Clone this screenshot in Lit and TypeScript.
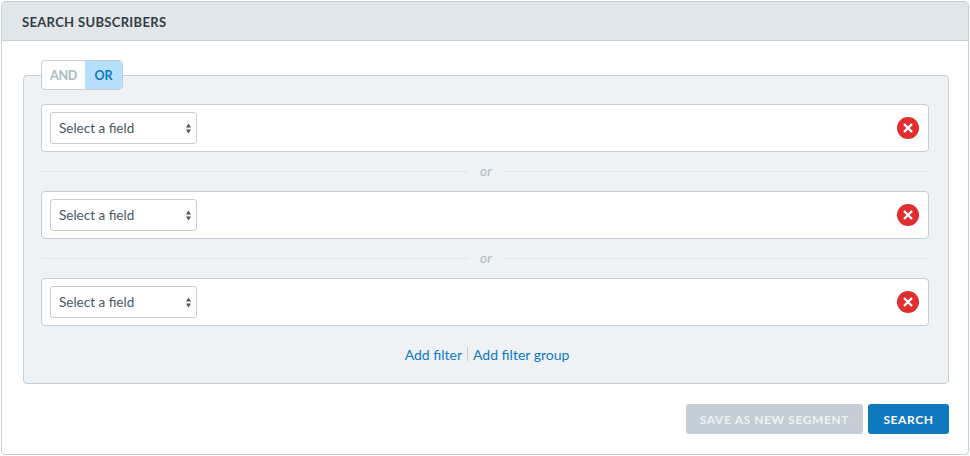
import { LitElement, html, css } from "lit";
import { customElement } from "lit/decorators.js";

@customElement("app-root")
export class AppRoot extends LitElement {
  static styles = css`
    :host { display: block; width: 970px; height: 456px; box-sizing: border-box; padding: 1px; font-family: "Lato", "Open Sans", sans-serif; color: #3d4a52; background: #fff; }
    * { box-sizing: border-box; }
    .card { width: 968px; height: 454px; border: 1px solid #c4ced4; border-radius: 4px; background: #fff; display: flex; flex-direction: column; }
    .head { height: 39px; flex: none; background: #e1e6ea; border-bottom: 1px solid #c4ced4; border-radius: 3px 3px 0 0; padding: 2px 20px 0; display: flex; align-items: center; font-size: 13px; font-weight: 700; letter-spacing: 0.33px; color: #333d44; }
    .body { padding: 19px 19px 0 21px; flex: 1; display: flex; flex-direction: column; }
    .toggle { align-self: flex-start; margin-left: 18px; height: 30px; width: 82px; display: flex; border: 1px solid #c4ced4; border-radius: 4px; background: #fff; font-size: 12.5px; font-weight: 700; position: relative; z-index: 1; margin-bottom: -15px; overflow: hidden; }
    .toggle span { display: flex; align-items: center; justify-content: center; }
    .and { width: 43px; color: #a9bac3; letter-spacing: -0.35px; }
    .or { flex: 1; background: #b5dffb; color: #0e79bf; }
    .group { height: 309px; background: #eef2f5; border: 1px solid #c4ced4; border-radius: 4px; padding: 28px 19px 0 17px; display: flex; flex-direction: column; }
    .row { height: 48px; background: #fff; border: 1px solid #c4ced4; border-radius: 4px; padding: 0 9px 0 8px; display: flex; align-items: center; justify-content: space-between; flex: none; }
    .select { width: 147px; height: 32px; border: 1px solid #c4ced4; border-radius: 3px; background: #fff; padding: 0 5px 1px 8px; display: flex; align-items: center; justify-content: space-between; font-size: 13.5px; color: #4a5760; }
    .arrows { margin-top: 1px; }
    .sep { height: 39px; display: flex; align-items: center; gap: 11px; color: #a9bac3; font-style: italic; font-size: 14px; flex: none; }
    .sep span { margin: -2px 0 0 0; }
    .sep i { flex: 1; height: 1px; background: #e1e6ea; }
    .sep i:first-child { flex: none; width: 428px; }
    .links { margin-top: 18px; padding-left: 4px; display: flex; justify-content: center; align-items: center; font-size: 14px; color: #0e79bf; height: 20px; gap: 5px; }
    .links b { width: 1px; height: 14px; background: #c4ced4; }
    .foot { display: flex; justify-content: flex-end; gap: 5px; margin-top: 20px; }
    .btn { height: 30px; border-radius: 3px; display: flex; align-items: center; justify-content: center; font-size: 12px; font-weight: 700; letter-spacing: 0.6px; color: #fff; }
    .save { width: 177px; background: #c4ced4; color: #edf1f4; }
    .search { width: 81px; background: #0e79bf; }
  `;

  private row() {
    return html`<div class="row">
      <div class="select">
        <span>Select a field</span>
        <svg class="arrows" width="5" height="11" viewBox="0 0 5 11"><path d="M2.5 0.5 5 4.5H0Z M0 6.5H5L2.5 10.5Z" fill="#4a5760"/></svg>
      </div>
      <svg width="22" height="22" viewBox="0 0 22 22"><circle cx="11" cy="11" r="11" fill="#e02d2f"/><path d="M7 7 15 15 M15 7 7 15" stroke="#fff" stroke-width="2.4"/></svg>
    </div>`;
  }

  private sep() {
    return html`<div class="sep"><i></i><span>or</span><i></i></div>`;
  }

  render() {
    return html`<div class="card">
      <div class="head">SEARCH SUBSCRIBERS</div>
      <div class="body">
        <div class="toggle"><span class="and">AND</span><span class="or">OR</span></div>
        <div class="group">
          ${this.row()}${this.sep()}${this.row()}${this.sep()}${this.row()}
          <div class="links"><span>Add filter</span><b></b><span>Add filter group</span></div>
        </div>
        <div class="foot"><div class="btn save">SAVE AS NEW SEGMENT</div><div class="btn search">SEARCH</div></div>
      </div>
    </div>`;
  }
}
